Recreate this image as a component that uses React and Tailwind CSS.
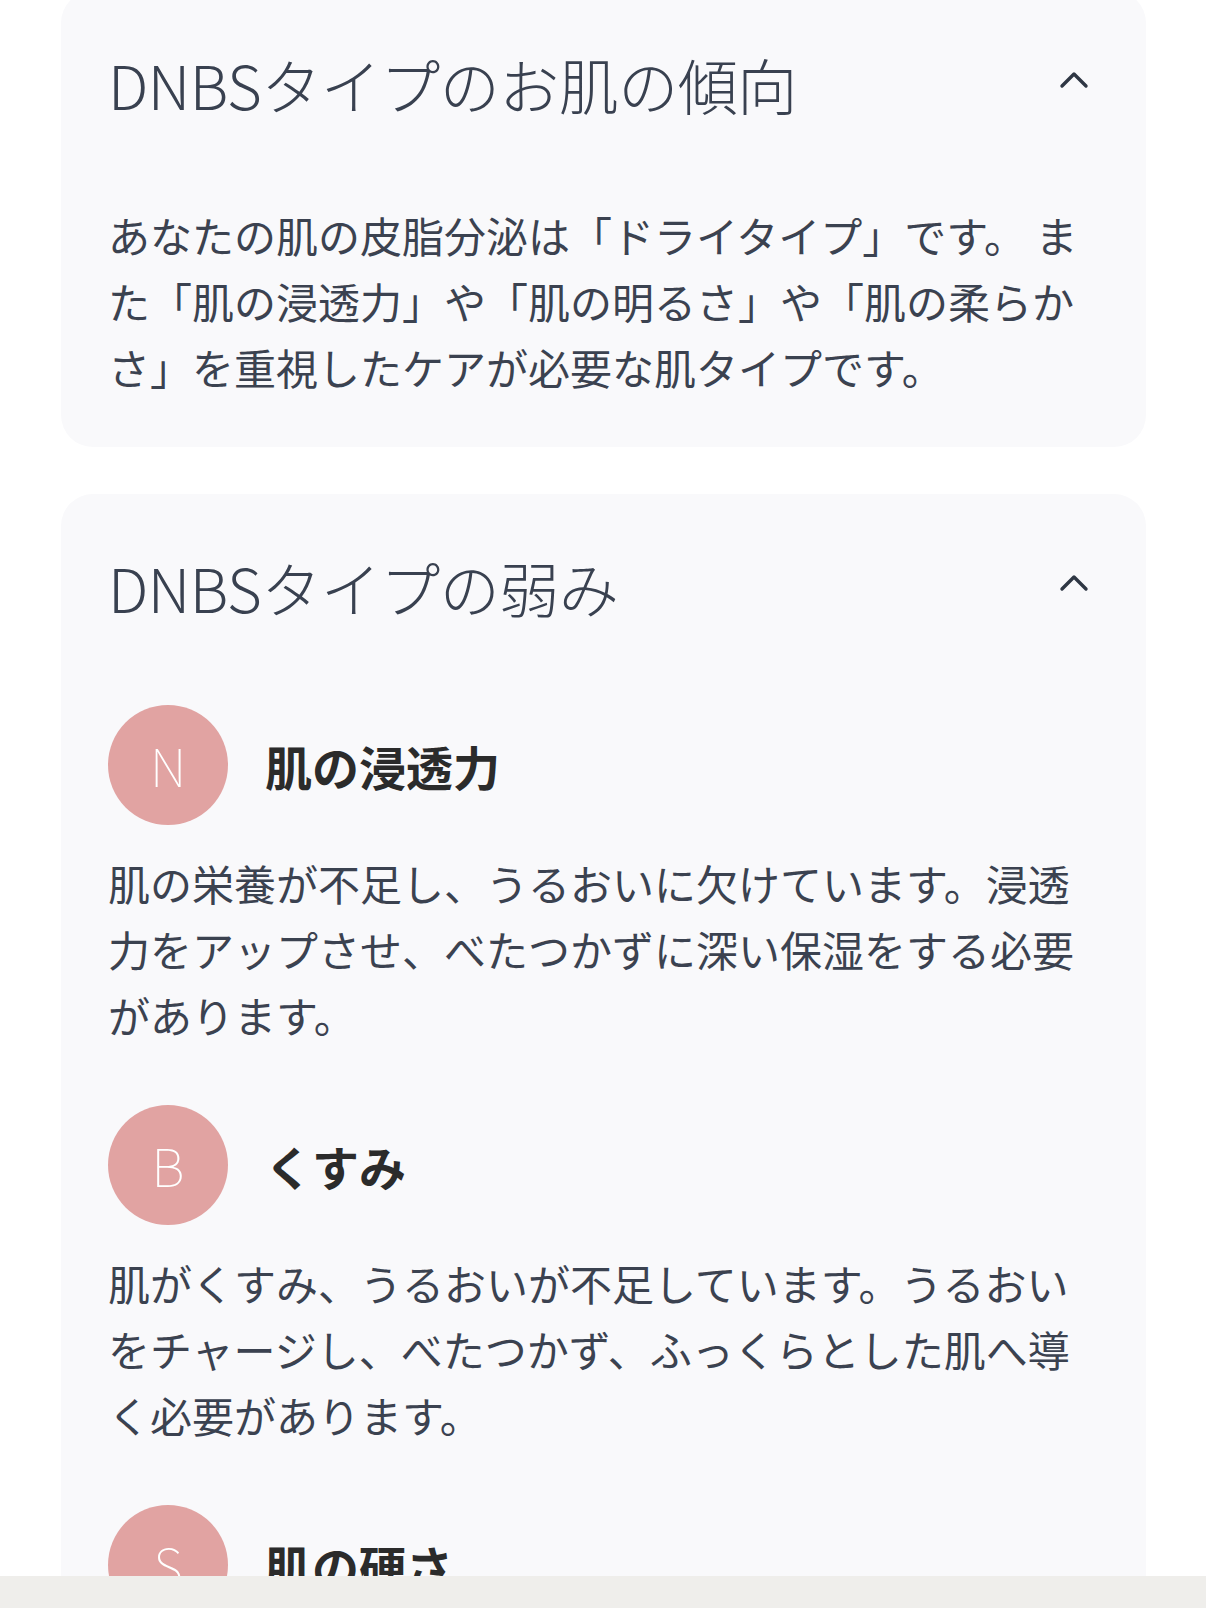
import React from "react";

const FONT = "font-['Noto_Sans_CJK_JP','Noto_Sans',sans-serif]";

const weaknesses = [
  {
    letter: "N",
    title: "肌の浸透力",
    text: "肌の栄養が不足し、うるおいに欠けています。浸透力をアップさせ、べたつかずに深い保湿をする必要があります。",
  },
  {
    letter: "B",
    title: "くすみ",
    text: "肌がくすみ、うるおいが不足しています。うるおいをチャージし、べたつかず、ふっくらとした肌へ導く必要があります。",
  },
  {
    letter: "S",
    title: "肌の硬さ",
    text: "肌が硬くなり、ごわつきを感じやすい状態です。角質をやわらげ、なめらかでしなやかな肌へ整える必要があります。",
  },
];

function Chevron() {
  return (
    <svg width="30" height="19" viewBox="0 0 30 19" fill="none" className="mb-[10px] shrink-0">
      <polyline points="3,16 15,4 27,16" stroke="#2f3744" strokeWidth="3.4" strokeLinecap="round" strokeLinejoin="round" />
    </svg>
  );
}

function Card({ title, children }) {
  return (
    <div className="rounded-[32px] bg-[#f9f9fb]">
      <div className="flex items-center justify-between pl-[47px] pr-[57px] pt-[48px] pb-[25px]">
        <h2 className="text-[60px] leading-[90px] font-light text-[#394150] tracking-[-0.5px]">{title}</h2>
        <Chevron />
      </div>
      <div className="px-[47px] pt-[48px] pb-[47px]">{children}</div>
    </div>
  );
}

export default function App() {
  return (
    <div className={`relative h-[1608px] overflow-hidden bg-white ${FONT}`}>
      <div className="-mt-[9px] pl-[61px] pr-[60px] flex flex-col gap-[47px]">
        <Card title="DNBSタイプのお肌の傾向">
          <p className="text-[42px] leading-[66px] text-[#3b4250]">
            あなたの肌の皮脂分泌は「ドライタイプ」です。 また「肌の浸透力」や「肌の明るさ」や「肌の柔らかさ」を重視したケアが必要な肌タイプです。
          </p>
        </Card>

        <Card title="DNBSタイプの弱み">
          <div className="flex flex-col gap-[57px]">
            {weaknesses.map((w) => (
              <div key={w.letter}>
                <div className="flex items-center gap-[37px]">
                  <div className="w-[120px] h-[120px] rounded-full bg-[#e1a3a2] flex items-center justify-center text-white text-[52px] font-thin leading-none">
                    {w.letter}
                  </div>
                  <h3 className="text-[47px] font-bold text-[#2b2b2b] leading-none">{w.title}</h3>
                </div>
                <p className="mt-[25px] text-[42px] leading-[66px] text-[#3b4250]">{w.text}</p>
              </div>
            ))}
          </div>
        </Card>
      </div>

      <div className="fixed bottom-0 inset-x-0 h-[32px] bg-[#efeeeb]" />
    </div>
  );
}
